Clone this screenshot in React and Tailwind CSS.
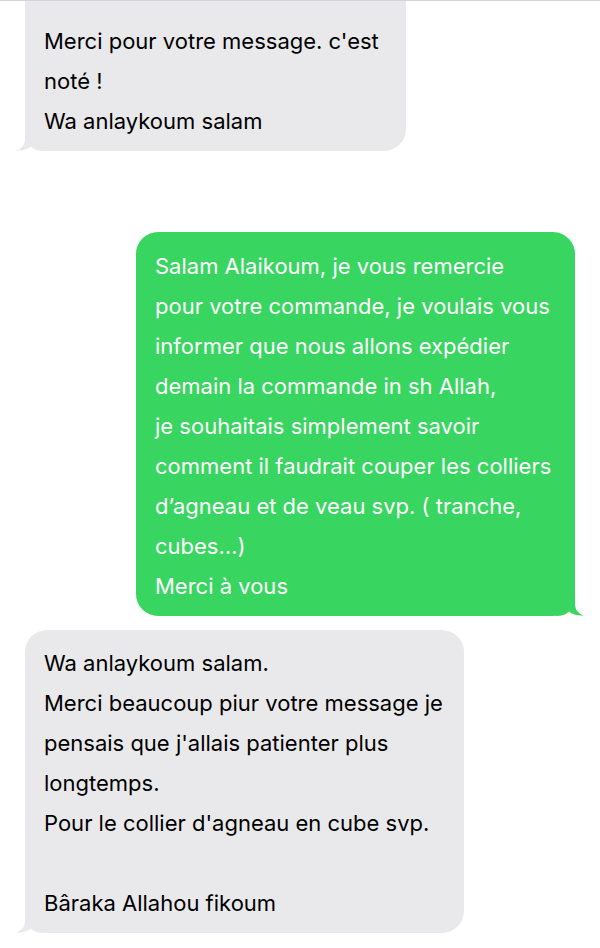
import React from "react";

function TailLeft({ color }) {
  return (
    <svg
      className="absolute bottom-0 left-[-9px]"
      width="28"
      height="26"
      viewBox="0 0 28 26"
    >
      <path
        d="M9 0 L9 14 C9 19.5 6 23.5 0 25.5 C6 26 11.5 24.5 15 21.5 C18 24.5 22 26 28 26 L28 0 Z"
        fill={color}
      />
    </svg>
  );
}

function TailRight({ color }) {
  return (
    <svg
      className="absolute bottom-0 right-[-9px] -scale-x-100"
      width="28"
      height="26"
      viewBox="0 0 28 26"
    >
      <path
        d="M9 0 L9 14 C9 19.5 6 23.5 0 25.5 C6 26 11.5 24.5 15 21.5 C18 24.5 22 26 28 26 L28 0 Z"
        fill={color}
      />
    </svg>
  );
}

function Lines({ lines }) {
  return lines.map((l, i) => (
    <div key={i} className="h-[40px] whitespace-nowrap">
      {l === "" ? "\u00a0" : l}
    </div>
  ));
}

export default function App() {
  return (
    <div
      className="w-[600px] h-[948px] overflow-hidden bg-white border-t border-[#d4d4d8] text-[22px] leading-[40px]"
      style={{ fontFamily: "Inter, 'Noto Sans', sans-serif" }}
    >
      <div className="flex flex-col">
        {/* Bubble 1 */}
        <div className="pl-[25px] mt-[-40px]">
          <div className="relative w-[381px] rounded-[22px] bg-[#e9e9eb] text-black pl-[19px] pt-[60px] pb-[10px]">
            <Lines
              lines={[
                "Merci pour votre message. c'est",
                "noté !",
                "Wa anlaykoum salam",
              ]}
            />
            <TailLeft color="#e9e9eb" />
          </div>
        </div>

        {/* Green bubble */}
        <div className="flex justify-end pr-[25px] mt-[81px]">
          <div className="relative w-[439px] rounded-[22px] bg-[#39d561] text-white pl-[19px] pt-[14px] pb-[10px]">
            <Lines
              lines={[
                "Salam Alaikoum, je vous remercie",
                "pour votre commande, je voulais vous",
                "informer que nous allons expédier",
                "demain la commande in sh Allah,",
                "je souhaitais simplement savoir",
                "comment il faudrait couper les colliers",
                "d’agneau et de veau svp. ( tranche,",
                "cubes…)",
                "Merci à vous",
              ]}
            />
            <TailRight color="#39d561" />
          </div>
        </div>

        {/* Bubble 3 */}
        <div className="pl-[25px] mt-[14px]">
          <div className="relative w-[439px] rounded-[22px] bg-[#e9e9eb] text-black pl-[19px] pt-[13px] pb-[10px]">
            <Lines
              lines={[
                "Wa anlaykoum salam.",
                "Merci beaucoup piur votre message je",
                "pensais que j'allais patienter plus",
                "longtemps.",
                "Pour le collier d'agneau en cube svp.",
                "",
                "Bâraka Allahou fikoum",
              ]}
            />
            <TailLeft color="#e9e9eb" />
          </div>
        </div>
      </div>
    </div>
  );
}
